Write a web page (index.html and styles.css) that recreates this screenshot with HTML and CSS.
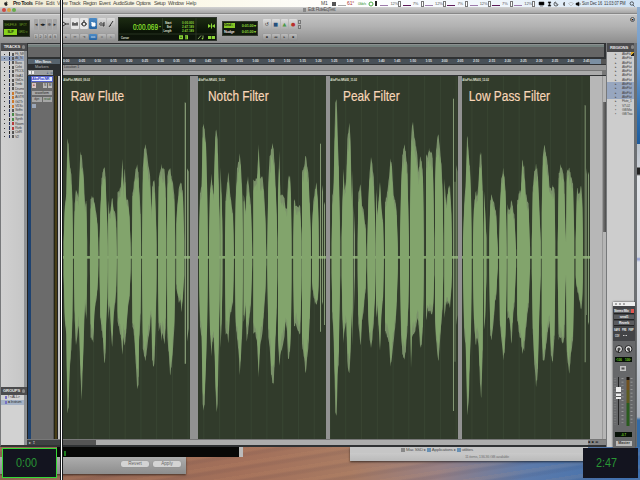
FILE: index.html
```html
<!DOCTYPE html>
<html lang="en">
<head>
<meta charset="utf-8">
<title>Edit: FluteEqTest</title>
<link rel="stylesheet" href="styles.css">
</head>
<body>
<div class="desktop">
  <header class="menubar">
    <svg class="apple" viewBox="0 0 8 10"><path d="M4 3C1.500 1.700 0 3.400 .6 6S2.500 10 4 9.300C5.500 10 7 8.500 7.400 7 5.800 6 6 4 7.200 3.300 6.200 2.200 5 2.500 4 3M4 2.300Q4 .5 5.600 0 5.800 1.700 4 2.300"/></svg>
    <b>Pro Tools</b><span>File</span><span>Edit</span><span>View</span><span>Track</span><span>Region</span><span>Event</span><span>AudioSuite</span><span>Options</span><span>Setup</span><span>Window</span><span>Help</span>
    <div class="status">
      <i class="s-m">M1</i><i class="s-sq"></i><i class="s-line"></i><i class="s-red">61°</i><i class="s-grn">0kb/s</i><svg viewBox="0 0 6 6"><circle cx="3" cy="3" r="2" fill="none" stroke="#4ba843"/></svg><i class="s-bar"></i>
      <div class="meters" id="meters"></div>
      <svg viewBox="0 0 6 6"><path d="M1 1h5v3H1zM2 5h3" stroke="#222" stroke-width=".5"/></svg>
      <svg viewBox="0 0 6 6"><path d="M2 1h3L2 5h3z" stroke="#222" stroke-width=".7"/></svg>
      <svg viewBox="0 0 6 6"><path d="M3 1a2 2 0 1 0 2 2M3 1.500V3h1.500" fill="none" stroke="#222" stroke-width=".7"/></svg>
      <svg viewBox="0 0 6 6"><path d="M2 2l2 2-1 1V1l1 1-2 2" fill="none" stroke="#333" stroke-width=".6"/></svg>
      <svg viewBox="0 0 6 6"><path d="M.5 2.500Q3 0 5.500 2.500L3 5z" fill="none" stroke="#aaa" stroke-width=".6"/></svg>
      <svg viewBox="0 0 6 6"><path d="M1 2h1l2-1v4L2 4H1zM5 2v2" stroke="#222" stroke-width=".5"/></svg>
      <svg class="clock" viewBox="0 0 44 7"><text x="0" y="5.300" textLength="43.500" lengthAdjust="spacingAndGlyphs">Sun Dec 16&nbsp; 11:03:07 PM</text></svg>
      <svg class="last" viewBox="0 0 6 6"><path d="M4 4l1.500 1.500M4.500 2.500a1.700 1.700 0 1 0-3.400 0 1.700 1.700 0 0 0 3.400 0" fill="none" stroke="#222" stroke-width=".7"/></svg>
    </div>
  </header>

  <aside class="strip"></aside>

  <section class="terminal"><i></i></section>
  <section class="dialog"><span>Revert</span><span>Apply</span></section>
  <section class="finder">
    <div class="path"><i class="disk"></i>Mac SSD ▸ <i></i>Applications ▸ <i></i>utilities</div>
    <div class="info">11 items, 136.36 GB available</div>
  </section>

  <main class="edit">
    <div class="title"><i class="r"></i><i class="y"></i><i class="g"></i><span><em></em>Edit: FluteEqTest</span></div>
    <div class="toolbar">
      <div class="modes"><span>SHUFFLE</span><span>SPOT</span><b>SLIP</b><span>GRID ▾</span></div>
      <div class="zooms">
        <div class="row tall"><i>◂</i><i class="dk">◂▸</i><i>≑</i><i>▸</i></div>
        <div class="row small"><i>1</i><i>2</i><i>3</i><i>4</i><i>5</i></div>
      </div>
      <div class="tools">
        <div class="row">
          <i><svg viewBox="0 0 8 10"><path d="M1 3l3 2-3 2M4 5h3"/></svg></i>
          <i class="lt"><svg viewBox="0 0 8 10"><path d="M1 5h6M2 3v4M6 3v4M4 4v3"/></svg></i>
          <i class="lt"><svg viewBox="0 0 8 10"><circle cx="4" cy="5" r="2"/><path d="M4 1v3M1 5h2M5 5h2"/></svg></i>
          <i class="on"><svg viewBox="0 0 8 10"><path d="M3 3v4h3V4H3z" fill="#fff"/></svg></i>
          <i><svg viewBox="0 0 8 10"><path d="M1 5h1M3 3v4M5 4v3h1V3"/></svg></i>
          <i><svg viewBox="0 0 8 10"><path d="M2 8l4-6M3 6l1 1"/></svg></i>
        </div>
        <div class="row small"><i>▸</i><i>↔</i><i>⇥</i><i class="on">▫▫</i><i>=</i><i>▹</i></div>
      </div>
      <div class="counter">
        <svg viewBox="0 0 97 22">
          <text class="big" x="14" y="12" textLength="25" lengthAdjust="spacingAndGlyphs">0:00.069</text>
          <path class="lime" d="M40 8h2l-1 1.500z"/>
          <g class="lab" text-anchor="end"><text x="52.500" y="5.500" textLength="6.500">Start</text><text x="52.500" y="9.800" textLength="4.500">End</text><text x="52.500" y="14.100" textLength="8">Length</text></g>
          <g class="val"><text x="63" y="5.500" textLength="12">0:00.000</text><text x="63" y="9.800" textLength="12">2:47.189</text><text x="63" y="14.100" textLength="12">2:47.189</text></g>
          <path class="lime" d="M89 6l3 2-3 2zM96 6l-3 2 3 2zM92 5.500h1v5h-1z"/>
          <path d="M0 16h97M77 0v22M43.500 0v15" stroke="#33402b" stroke-width=".7"/>
          <text class="cur" x="2" y="20.800" textLength="8">Cursor</text>
          <path class="lime" d="M60 17.300h4v4h-4zM66 17.300h3v4h-3zM89 18h7v3h-7z"/>
          <path d="M61 19.300h2M67 18v3M92.500 18v3" stroke="#1b2b10" stroke-width=".7"/>
          <path d="M79 21l3-3.500M84 20.500v-3" stroke="#b9e08a" stroke-width=".7"/><circle cx="83.400" cy="20.600" r=".8" class="lime"/>
        </svg>
      </div>
      <div class="gridbox"><div><b>Grid ♩</b><span>0:01.00 ▾</span></div><div><em>Nudge</em><span>0:01.00 ▾</span></div></div>
      <div class="transport">
        <div class="row"><i>↺</i><i class="sq">■</i><i class="gr">▲</i><i class="rd">●</i></div>
        <div class="row small"><i>▪</i><i>◂◂</i><i>▸</i><i>▪</i></div>
      </div>
      <div class="pair"><i></i><i></i></div>
      <span class="knob">▾</span>
    </div>

    <div class="body">
      <div class="side left">
        <h2>TRACKS<i></i></h2>
        <div class="list" id="tracks"></div>
        <h2>GROUPS<i></i></h2>
        <div class="groups"><p><em></em><b>!</b> &lt;ALL&gt;</p><p class="sel"><em></em><b>a</b> Instrum</p></div>
      </div>

      <div class="center">
        <div class="overview"></div>
        <div class="rulers">
          <div class="names"><b>Min:Secs</b><span>Markers</span><div class="icons"><i></i><i></i><em>↓ ▫</em></div></div>
          <div class="lanes"><div class="ticks" id="ticks"></div><div class="marker">Location 1</div><div class="blank"></div></div>
        </div>
        <div class="canvas">
          <div class="head">
            <div class="blue"></div>
            <div class="strip-head">
              <b>AltoFlut-NR</b>
              <div class="btns"><i class="rec">●</i><span></span><i>S</i><i>M</i></div>
              <div class="wide">waveform</div>
              <div class="btns two"><i>dyn</i><i class="rd">read</i></div>
              <div class="keys"></div>
            </div>
            <div class="meter"></div>
            <div class="scale"></div>
          </div>
          <div class="clips" id="clips"></div>
          <div class="rest"></div>
          <div class="vscroll"><i></i></div>
        </div>
        <div class="hscroll"><div class="lft">▸ ↥</div><div class="trk"></div><div class="end">▪ ▪ ◂▸</div></div>
      </div>

      <div class="side right">
        <h2>REGIONS<i></i></h2>
        <div class="list" id="regions"></div>
      </div>
    </div>
  </main>

  <section class="mixer">
    <div class="mt"><i></i><i></i><i></i></div>
    <div class="dark"><p>Stereo Mix<em></em></p><p>send1</p><p>Reverb</p>
      <svg viewBox="0 0 20 12"><text x="0" y="4" textLength="6">SAFE</text><text x="8" y="4" textLength="4.500">PRE</text><text x="14.500" y="4" textLength="5">FMP</text><text x="1" y="10" textLength="4.500">COV</text><path d="M9 8.500h4" stroke="#ccc" stroke-dasharray="1 .5"/></svg>
    </div>
    <div class="pan">
      <svg viewBox="0 0 22 100">
        <g fill="#ddd" stroke="#222"><circle cx="6" cy="8" r="3.500"/><circle cx="15.500" cy="8" r="3.500"/></g>
        <g stroke="#222" stroke-width="1.500"><path d="M6 8l-1 3M15.500 8l1 3"/></g>
        <circle cx="6" cy="8" r="1.600" fill="#444"/><circle cx="15.500" cy="8" r="1.600" fill="#444"/>
        <path fill="#071107" d="M2 16h17v5H2zM2 91h17v5H2z"/>
        <g fill="#7cd328" font-size="3.600" font-family="Liberation Sans" font-weight="bold"><text x="3" y="20" textLength="6">‹100</text><text x="12" y="20" textLength="6">100›</text><text x="8" y="95" textLength="5">-0.7</text></g>
        <path fill="#c4c4c4" d="M7 25h6v5H7z"/><path fill="#555" d="M8.500 26.500h3v2h-3z"/>
        <path stroke="#222" d="M5.500 36v48"/><path stroke="#a5a5a5" stroke-dasharray=".7 3" stroke-width="2" d="M9.500 37v47M18.500 37v47"/>
        <path stroke="#ccc" stroke-dasharray=".6 2" stroke-width="2.500" d="M2 37v47" opacity=".3"/>
        <path fill="#181008" d="M13.500 36h3v3h-3z"/><path fill="#70501d" d="M13.500 39h3v10h-3z"/><path fill="#5d5a1e" d="M13.500 49h3v13h-3z"/><path fill="#2a5b1e" d="M13.500 62h3v23h-3z"/>
        <path fill="#eee" d="M3 46h5v12H3z"/><path fill="#555" d="M3 51h5v1.500H3zM3 55h5v1H3z"/>
      </svg>
      <span>Master</span>
    </div>
  </section>

  <div class="timer sel"><svg viewBox="0 0 23 12"><text x="0" y="10.300" textLength="21" lengthAdjust="spacingAndGlyphs">0:00</text></svg></div>
  <div class="timer end"><svg viewBox="0 0 23 12"><text x="0" y="10.300" textLength="21" lengthAdjust="spacingAndGlyphs">2:47</text></svg></div>
  <div class="playhead"></div>
</div>
<script src="app.js"></script>
</body>
</html>
```
FILE: styles.css
```css
* { box-sizing: border-box; }
body { margin: 0; overflow: hidden; font-family: "Liberation Sans Narrow", "Liberation Sans", sans-serif; }
i, em { font-style: normal; }
h2, p { margin: 0; }
svg { display: block; overflow: visible; }
.desktop {
  position: relative; width: 640px; height: 480px; overflow: hidden;
  background:
    repeating-linear-gradient(171deg, rgba(220,160,110,.08) 0 3px, rgba(50,40,60,.07) 5px 7px, transparent 9px 13px),
    linear-gradient(100deg, #8c6250 0, #a3705a 45%, #a77a62 60%, #978084 72%, #5d7bab 84%, #3d6fae 100%);
}
.menubar {
  height: 7px; display: flex; align-items: center; padding-left: 4px; gap: 4px;
  background: linear-gradient(90deg, #efe9d3, #fbf8e8 30%, #fff 55%, #eef5fb 80%, #cfe2f4);
  font: 5.2px/7px "Liberation Sans", sans-serif; color: #4a483f; white-space: nowrap; letter-spacing: -.1px;
}
.menubar > span, .menubar > b { flex: none; }
.menubar > b { width: 18px; margin-left: 1px; letter-spacing: -.45px; color: #222; }
.menubar > span:nth-of-type(1), .menubar > span:nth-of-type(2) { width: 7px; }
.menubar > span:nth-of-type(3) { width: 8px; }
.menubar > span:nth-of-type(4) { width: 10px; letter-spacing: -.3px; }
.menubar > span:nth-of-type(5) { width: 12px; letter-spacing: -.5px; }
.menubar > span:nth-of-type(6) { width: 10px; letter-spacing: -.4px; }
.menubar > span:nth-of-type(7) { width: 19px; letter-spacing: -.4px; }
.menubar > span:nth-of-type(8) { width: 14px; letter-spacing: -.5px; }
.menubar > span:nth-of-type(9) { width: 10px; letter-spacing: -.5px; }
.menubar > span:nth-of-type(10) { width: 14px; letter-spacing: -.5px; }
.apple { width: 4px; height: 5px; fill: #222; flex: none; }
.status { position: absolute; left: 321px; right: 2px; top: 0; height: 7px; display: flex; align-items: center; font-size: 5px; }
.status svg { width: 6px; height: 6px; margin-right: 1.4px; flex: none; }
.s-m { width: 11px; }
.s-sq { width: 4px; height: 4px; background: #555; margin-right: 2px; }
.s-line { width: 8px; height: 1px; background: #aaa; margin: 3px 1px 0 0; }
.s-red { color: #a33; width: 11px; }
.s-grn { color: #4a9a45; width: 10px; font-size: 4px; letter-spacing: -.3px; }
.s-bar { width: 2px; height: 5px; background: #222; }
.meters { width: 160px; flex: none; display: flex; justify-content: space-between; padding: 0 2px 0 3px; margin-right: 1px; align-items: center; }
.meters span { display: flex; align-items: center; width: 21px; font-size: 4px; color: #555; }
.meters u { width: 8px; height: 1px; background: #9d7bab; margin: 4px 2px 0 0; flex: none; }
.meters span:nth-child(even) u { background: #5d1a58; }
.meters em { width: 3px; height: 6px; border: .5px solid #777; margin-left: auto; background: #fff; }
.status .clock { width: 44px; height: 7px; margin: 0 3px 0 -1px; font-size: 5px; fill: #333; }
.status .last { margin: 0; }
.strip {
  position: absolute; left: 637px; top: 7px; width: 3px; height: 440px;
  background: linear-gradient(#8dadcf 0, #6b98cb 60px, #2c6dae 110px, #1f5c9d 137px, #b9c2cc 137px, #c9ced5 160px, #222 161px, #222 167px, #e1e4e8 169px, #d4d8de 250px, #8c9ad0 252px, #dfe2e8 255px, #d0d4da 330px, #a9b0ba 410px, #336aa5 413px);
}
.terminal { position: absolute; left: 57px; top: 447px; width: 186px; height: 10px; background: #080807; border-right: 4px solid #bbb; }
.terminal i { display: block; width: 2px; height: 5px; margin: 4px 0 0 7px; background: #1d7c1d; }
.dialog {
  position: absolute; left: 0; top: 457px; width: 186px; height: 17px; padding: 4px 5px 0; gap: 4px;
  display: flex; justify-content: flex-end; background: linear-gradient(#adadad, #8d8d8d); box-shadow: 0 1px 2px rgba(0,0,0,.6);
}
.dialog span { width: 28px; height: 6px; border-radius: 2px; background: #d4d4d4; font: 4.6px/6px "Liberation Sans", sans-serif; text-align: center; color: #666; box-shadow: 0 0 1px #777; }
.finder { position: absolute; left: 350px; top: 447px; width: 238px; height: 14px; background: linear-gradient(#d5d5d5, #bababa); box-shadow: 0 1px 2px rgba(0,0,0,.6); font: 4.4px/6px "Liberation Sans", sans-serif; color: #555; white-space: nowrap; }
.path { height: 6px; padding-left: 51px; letter-spacing: -.22px; display: flex; align-items: center; gap: 1px; background: #c6c6c6; }
.path i { width: 4px; height: 4px; background: #6790b4; flex: none; }
.path .disk { background: #888; }
.info { padding: 1px 0 0 115px; font-size: 4px; letter-spacing: -.32px; color: #777; }

.edit { position: absolute; left: 0; top: 7px; width: 637px; height: 440px; display: grid; grid-template-rows: 7px 29px 404px; background: #8e8e8e; }
.title { display: flex; align-items: center; gap: 1px; padding-left: 2px; background: linear-gradient(#d2d2d2, #a5a5a5); border-bottom: 1px solid #888; }
.title > i { width: 4px; height: 4px; border-radius: 50%; }
.r { background: #cf4a43; } .y { background: #d9a243; } .g { background: #67ad4b; }
.title span { margin-left: 286px; display: flex; align-items: center; font: 4.8px/6px "Liberation Sans", sans-serif; letter-spacing: -.55px; color: #555; }
.title em { width: 3px; height: 4px; background: #888; margin-right: 2px; }
.toolbar { display: flex; background: linear-gradient(#c3c3c3, #b2b2b2 40%, #8d8d8d); border-top: 1px solid #d6d6d6; position: relative; }
.modes { margin: 5px 0 0 3px; width: 27px; height: 17px; background: #131d0a; border: 1px solid #353a31; display: grid; grid-template-columns: 13px 12px; grid-template-rows: 8px 6px; font: 3px/8px "Liberation Sans", sans-serif; letter-spacing: -.2px; color: #6d9b25; text-align: center; }
.modes b { background: #86d21b; color: #183006; line-height: 6px; }
.modes span:last-child { line-height: 6px; }
.row { display: flex; gap: 1px; height: 11px; }
.row i { flex: 1; display: grid; place-items: center; background: linear-gradient(#ddd, #a8a8a8); border-radius: 1px; font: 5px/5px "DejaVu Sans", sans-serif; color: #333; overflow: hidden; }
.row.small { height: 6px; }
.row.small i { background: linear-gradient(#bdbdbd, #919191); font-size: 3.4px; box-shadow: 0 0 1px #777; }
.row svg { width: 8px; height: 10px; fill: none; stroke: #333; stroke-width: 1; }
.zooms { width: 23px; margin: 4px 0 0 4px; display: grid; grid-template-rows: 11px 6px; gap: 4px; align-content: start; }
.zooms .tall i { background: #a5a5a5; }
.zooms .dk { color: #111; flex: 1.5; }
.tools { width: 51px; margin: 3px 0 0 5px; display: grid; grid-template-rows: 11px 6px; gap: 5px; align-content: start; }
.tools .lt { background: #e6e6e6; }
.row .on, .row.small .on { background: linear-gradient(#4d8cc7, #2563a2); color: #fff; }
.tools .on svg { stroke: #fff; }
.counter { margin: 2px 0 0 5px; width: 99px; height: 24px; background: linear-gradient(#1c2b12, #0b1407 60%, #0e140b); border: 1px solid #303530; }
.counter svg { width: 97px; height: 22px; font: bold 3.6px "Liberation Sans", sans-serif; }
.counter .big { font: 9.4px "Liberation Sans", sans-serif; fill: #8fe32e; stroke: #8fe32e; stroke-width: .2; }
.lime { fill: #8bd638; }
.lab, .cur { fill: #e4e8de; }
.val { fill: #8bd638; }
.gridbox { margin: 6px 0 0 5px; width: 36px; height: 15px; background: #121a0e; border: 1px solid #343a30; padding: 1px; font: bold 3.8px/6px "Liberation Sans", sans-serif; color: #8bd638; }
.gridbox div { display: flex; justify-content: space-between; height: 6px; }
.gridbox b { width: 11px; background: #86c727; color: #15240a; height: 5px; line-height: 5px; white-space: nowrap; letter-spacing: -.2px; }
.gridbox em { color: #ddd; letter-spacing: -.3px; }
.gridbox span { letter-spacing: -.2px; white-space: nowrap; }
.transport { width: 34px; margin: 4px 0 0 5px; display: grid; grid-template-rows: 11px 6px; gap: 4px; align-content: start; }
.transport .sq { color: #26507d; } .transport .gr { color: #4c9a48; } .transport .rd { color: #b92f2b; }
.pair { display: grid; grid-template-rows: 4px 4px; gap: 1px; margin: 5px 0 0 1px; width: 3px; align-content: start; }
.pair i { border: .5px solid #777; background: #bbb; }
.knob { margin: 2px 2px 0 auto; width: 5px; height: 5px; border-radius: 50%; border: .5px solid #555; font: 4px/4px "DejaVu Sans", sans-serif; text-align: center; background: #ccc; }

.body { display: grid; grid-template-columns: 27px 579px 31px; background: #2c2e2f; }
.side { display: grid; background: #c9c9c9; border-left: 1px solid #77797b; overflow: hidden; }
.side h2 { background: #4b4b4d; color: #e6e6e6; font: bold 4.2px/8px "Liberation Sans", sans-serif; height: 8px; text-align: right; padding-right: 7px; letter-spacing: -.2px; position: relative; }
.side h2 i { position: absolute; right: 2px; top: 2px; width: 3px; height: 4px; border-radius: 2px; background: #888; }
.left { grid-template-rows: 8px 336px 8px 52px; border-bottom: 2px solid #333; }
.list { font: 3.6px/4.3px "Liberation Sans", sans-serif; color: #444; padding-top: 1px; white-space: nowrap; overflow: hidden; }
.left .list { border-right: 3px solid #8f9295; background: linear-gradient(90deg, #d0d0d0, #c6c6c6); }
.left .list p { display: flex; align-items: center; height: 4.35px; padding-left: 3px; letter-spacing: -.3px; }
.list .dot { width: 1px; height: 1px; background: #333; margin-right: 4px; flex: none; }
.list .bar { width: 1px; height: 3.4px; margin-right: 2px; flex: none; }
.list .ico { width: 2px; height: 3px; margin-right: 1px; background: #555; flex: none; }
.list .sel { background: #97a6bf; }
.groups { border-right: 3px solid #8f9295; background: #d2d2d2; font: 3.6px/5px "Liberation Sans", sans-serif; letter-spacing: -.2px; white-space: nowrap; overflow: hidden; color: #333; }
.groups p { height: 5px; padding-left: 4px; display: flex; gap: 1px; align-items: center; }
.groups em { width: 2px; height: 3px; background: #7770c5; }
.groups .sel { background: #a5b2c5; }
.right { border-right: 3px solid #6d7073; grid-template-rows: 9px 395px; background: #cfcfcf; }
.right h2 { height: 9px; line-height: 9px; padding-right: 6px; }
.right h2 i { right: 0; }
.right .list { font-size: 3.4px; letter-spacing: -.25px; padding-top: 0; background: #cdcdcd; position: relative; }
.right .list p { height: 4.3px; padding-left: 8px; display: flex; gap: 3px; }
.right .list span { width: 4px; }
.right .list::after { content: ""; position: absolute; right: 0; top: 0; width: 3px; height: 4px; background: linear-gradient(135deg, #d8a82c 50%, #222 50%); }

.center { display: grid; grid-template-rows: 14px 18px 1px 363px 6px 2px; background: #303234; }
.center > .canvas { grid-row: 4; }
.center > .hscroll { grid-row: 5; }
.overview { margin: 1px 2px 0 1px; border-top: 1px solid #8b8f8f; background: #666; box-shadow: inset 0 2px #73807d; }
.rulers { display: grid; grid-template-columns: 36px 543px; }
.names { display: grid; grid-template-rows: 2px 5px 6px 5px; padding-left: 1px; background: #2e3132; font: bold 4px/5px "Liberation Sans", sans-serif; color: #e8edf0; }
.names b { grid-row: 2; background: #57636d; padding-left: 7px; letter-spacing: -.2px; }
.names span { grid-row: 3; padding-left: 7px; color: #bbb; background: #2c2f31; font-weight: normal; line-height: 6px; font-size: 3.8px; }
.icons { grid-row: 4; background: #9c9fa1; display: flex; gap: 1px; align-items: center; padding-left: 1px; width: 25px; }
.icons i { width: 2px; height: 3px; background: #eee; }
.icons em { margin-left: 11px; font: 3.6px/4px "DejaVu Sans", sans-serif; color: #244a77; white-space: nowrap; }
.lanes { display: grid; grid-template-rows: 2px 5px 1px 5px 5px; }
.ticks { grid-row: 2; display: flex; font: bold 3.5px/5px "Liberation Sans", sans-serif; color: #d5d9dc; overflow: hidden; background: linear-gradient(90deg, #485057 0 527px, #7b8fa2 527px 538px, #555 538px); }
.ticks span { flex: none; width: 15.77px; text-align: left; letter-spacing: -.2px; }
.marker { grid-row: 4; background: #969696; font: 3.6px/5px "Liberation Sans", sans-serif; letter-spacing: -.15px; color: #333; padding-left: 1px; }
.blank { grid-row: 5; background: #ababab; border-top: .5px solid #777; border-right: 4px solid #777; }
.canvas { display: grid; grid-template-columns: 36px 527px 13px 3px; }
.head { display: grid; grid-template-columns: 3px 22px 5px 5px; padding-left: 1px; background: #222; }
.blue { background: #1e426f; }
.strip-head { background: #6b6b6b; }
.strip-head > b { display: block; height: 6px; background: #e7ebff; border: .5px solid #5463c9; font: bold 3.8px/5px "Liberation Sans", sans-serif; letter-spacing: -.35px; color: #3243c2; overflow: hidden; white-space: nowrap; }
.btns { display: flex; gap: 1px; margin: 1px 1px 3px; height: 5px; }
.btns i { width: 4px; background: #b9b9b9; font: 3.2px/5px "Liberation Sans", sans-serif; text-align: center; color: #333; }
.btns .rec { background: #d9c5c3; color: #833; }
.btns span { flex: 1; }
.wide { height: 4px; margin: 0 1px 2px; background: #a6a6a6; font: 3.2px/4px "Liberation Sans", sans-serif; text-align: center; color: #222; }
.btns.two { margin: 0 1px; } .btns.two i { flex: 1; background: #a6a6a6; } .btns.two .rd { color: #285b28; }
.keys { width: 4px; height: 4px; margin: 2px 0 0 1px; background: #9ca7b8; }
.meter { background: linear-gradient(90deg, #505050 0 1px, #252515 1px 2px, #493f18 2px 4px, #222 4px); }
.scale { background: linear-gradient(90deg, #c0c0c0 0 2px, #888 2px 3px, #111 3px); }
.clips { display: grid; grid-template-columns: 127px 8px 128px 4px 128px 4px 128px; background: #929292; }
.clip { background: #313b2b; }
.clip svg { width: 100%; height: 363px; overflow: hidden; }
.gl { stroke: #3c4a37; stroke-width: 2; }
.edge { fill: #95b181; opacity: .72; }
.core { fill: #82a46c; }
.fine { fill: #9db78b; opacity: .75; }
.cname { font: bold 11px "Liberation Sans", sans-serif; fill: #e5e8df; }
.ctitle { font: 45px "Liberation Sans", sans-serif; fill: #f8d6b8; stroke: #f8d6b8; stroke-width: .6px; }
.rest { background: linear-gradient(90deg, #b7b7b7 0 12px, #999 12px); }
.vscroll { background: #b5b5b5; padding-top: 26px; }
.vscroll i { display: block; height: 130px; background: linear-gradient(90deg, #777, #4c4c4c); }
.hscroll { display: grid; grid-template-columns: 33px 1fr 18px; background: #a8a8a8; border-top: 1px solid #777; }
.lft { background: #3f4143; color: #ccc; font: 4px/5px "DejaVu Sans", sans-serif; padding-left: 2px; }
.trk { background: linear-gradient(90deg, #555 0 36px, #adadad 36px); }
.end { background: #858585; font: 3.5px/5px "DejaVu Sans", sans-serif; color: #222; white-space: nowrap; overflow: hidden; }

.mixer { position: absolute; left: 613px; top: 302px; width: 22px; height: 146px; background: #777; display: grid; grid-template-rows: 4px 35px 107px; box-shadow: 0 0 2px #333; }
.mt { background: #ededed; display: flex; gap: 2px; padding: 1px 0 0 2px; }
.mt i { width: 2px; height: 2px; border: .5px solid #777; border-radius: 50%; }
.dark { background: #434447; padding: 3px 1px 0; font: bold 3.3px/4.5px "Liberation Sans", sans-serif; color: #eee; }
.dark p { background: #5b5c5f; height: 5px; margin-bottom: 1px; text-align: center; letter-spacing: -.2px; position: relative; white-space: nowrap; border-bottom: .5px solid #222; }
.dark p:first-child { text-align: left; }
.dark em { position: absolute; right: 0; top: 0; width: 3px; height: 4px; background: #e05650; }
.dark svg { width: 20px; height: 12px; fill: #eee; font-size: 3px; }
.pan { display: grid; grid-template-rows: 100px 5px; background: #67686a; }
.pan svg { width: 22px; height: 100px; }
.pan span { margin: 0 3px; background: #bbb; color: #333; font: bold 3.6px/4px "Liberation Sans", sans-serif; text-align: center; }
.timer { position: absolute; top: 448px; height: 30px; background: #13141f; display: flex; align-items: center; }
.timer svg { width: 23px; height: 12px; margin-left: 13px; fill: #289634; font: 12px "Liberation Sans", sans-serif; }
.timer.sel { left: 2px; width: 55px; border: 1px solid #35d835; }
.timer.end { left: 583px; width: 55px; background: #13141f; }
.playhead { position: absolute; left: 60px; top: 0; width: 3px; height: 480px; background: #fff; border: solid #17191b; border-width: 0 1px; }
```
FILE: app.js
```js
const $ = id => document.getElementById(id);

$('meters').innerHTML = ['12%', '7%', '12%', '7%', '12%', '7%', '12%']
  .map(v => `<span><u></u>${v}<em></em></span>`).join('');

$('ticks').innerHTML = Array.from({ length: 34 }, (_, k) => {
  const s = k * 5;
  return `<span>${Math.floor(s / 60)}:${String(s % 60).padStart(2, '0')}</span>`;
}).join('');

const tracks = ['Flt_NR', 'Alt_N', 'Bass', 'Celst', 'PICOL', 'GtrA1', 'GtrDs', 'Trmb', 'Drums', 'Piano', 'AGTR', 'Gt2Tr', 'Vl1Sc', 'StrEn', 'Street', 'Synth', 'Room', 'Rvrb', 'CtrlR', 'V2'];
const hue = i => i > 8 && i < 13 ? '#cb782c' : i === 14 || i === 15 ? '#488848' : i === 16 || i === 17 ? '#b43b3b' : '#555';
$('tracks').innerHTML = tracks.map((t, i) =>
  `<p class="${i === 1 ? 'sel' : ''}"><i class="dot"></i><i class="bar" style="background:${i % 3 ? '#24305c' : '#222'}"></i><i class="ico" style="background:${hue(i)}"></i>${t}</p>`).join('');

const regions = ['AltoFlut', 'AltoFlut', 'AltoFlut', 'AltoFlut', 'AltoFlut', 'AltoFlut', 'AltoFlut', 'AltoFlut', 'AltoFlut', 'AltoFlut', 'AltoFlut', 'Flute_1', 'V7-02', 'GB Mix', 'GB Trac'];
$('regions').innerHTML = regions.map((t, i) =>
  `<p class="${i > 6 && i < 11 ? 'sel' : ''}"><span>${i < 12 ? '▸' : '▪'}</span>${t}</p>`).join('');

/* Envelope lobes: x, top, bottom triples; the axis is at y = 547. */
const clips = [
  { x: 8, w: 382, off: 60, title: 'Raw Flute', tx: 31, tw: 161, name: 'AltoFlut-NR#05_09-02', gap: 8, lobes: [
    '10 500 600 13 390 740 18 345 790 21 180 1025 25 200 1005 28 255 900 33 290 830 36 350 760 38 490 600',
    '41 490 600 43 380 740 47 335 820 51 350 790 54 360 760 57 300 790 60 222 900 64 232 985 67 265 900 71 310 780 75 390 690 78 365 745 81 500 600',
    '89 500 600 91 370 790 95 352 805 99 365 805 103 380 710 108 410 680 112 440 650 115 530 570',
    '118 500 600 120 400 740 124 305 770 128 280 800 132 268 872 135 280 862 138 350 760 141 430 690 143 520 580',
    '144 370 740 148 410 700 152 390 770 156 360 825 160 390 740 164 400 700 168 440 650 170 530 560',
    '172 350 740 177 340 770 182 330 790 187 248 843 190 320 800 194 275 815 198 360 780 204 370 700 208 410 680 212 520 580',
    '215 500 600 217 350 760 222 310 790 227 270 880 231 262 948 235 285 940 237 335 800 241 400 740 243 510 580',
    '246 480 620 248 270 830 252 215 850 256 198 868 260 230 830 265 260 800 270 290 770 272 350 730 274 400 740 276 330 860 281 305 888 284 320 850 287 400 740 290 510 600',
    '294 480 620 296 300 780 300 280 760 304 265 800 308 275 780 313 280 810 317 330 770 319 500 600',
    '321 480 620 322 290 800 326 280 840 330 272 908 335 300 880 339 315 830 343 350 770 346 500 600',
    '349 430 640 353 370 670 357 330 690 361 315 680 365 320 720 369 350 670 373 500 600',
    '374 82 866 378 84 866', '381 280 800 386 290 760'] },
  { x: 18, w: 384, off: 192, title: 'Notch Filter', tx: 48, tw: 182, name: 'AltoFlut-NR#05_10-02', gap: 4, lobes: [
    '21 490 600 24 350 760 29 320 800 32 155 990 35 135 1018 38 160 990 42 200 870 45 310 780 48 490 600',
    '51 480 600 54 340 780 58 295 845 62 330 800 65 350 800 68 230 850 71 160 960 74 158 1025 77 190 990 81 350 780 84 480 600',
    '85 270 825 89 350 760 92 480 600',
    '99 480 600 101 360 790 105 320 780 109 288 808 113 330 740 118 380 710 123 410 690 126 520 570',
    '129 500 600 131 370 750 135 270 800 139 255 830 143 233 902 147 270 850 151 350 770 153 500 590',
    '155 350 750 160 400 700 164 330 800 168 300 780 173 350 730 177 390 690 181 520 570',
    '184 300 790 190 310 780 195 300 810 200 207 908 205 300 820 211 300 780 216 340 720 221 440 640 223 530 570',
    '226 500 600 229 310 790 233 240 820 237 220 900 241 203 925 245 220 930 250 300 820 254 400 720 256 500 600',
    '258 350 800 262 220 880 265 350 850 270 350 830 276 360 800 281 390 750 285 400 770 288 310 860 294 290 840 297 350 780 299 510 590',
    '304 480 620 306 365 760 312 390 750 318 385 780 325 390 780 329 500 600',
    '330 290 810 335 270 850 341 235 902 346 270 850 350 300 810 353 370 750 357 490 600',
    '360 450 630 364 370 670 369 340 690 373 310 700 378 370 680 381 500 600',
    '384 205 770 387 207 770', '390 330 690 393 350 680', '396 380 750 399 390 750'] },
  { x: 15, w: 384, off: 325, title: 'Peak Filter', tx: 54, tw: 170, name: 'AltoFlut-NR#05_11-02', gap: 4, lobes: [
    '20 500 600 22 360 730 26 320 800 29 150 930 31 70 1025 35 70 1025 38 160 910 41 260 870 43 350 750 46 500 600',
    '50 480 610 52 370 740 56 280 805 59 340 770 64 300 750 67 180 870 70 160 900 73 136 902 77 200 830 80 370 720 82 280 818 84 450 640',
    '86 390 730 90 480 600',
    '98 490 600 100 340 760 107 322 820 111 380 750 117 410 700 122 450 650 124 530 570',
    '127 500 600 130 370 740 134 285 800 138 240 825 142 260 800 147 310 740 150 420 680 152 520 580',
    '153 330 740 157 410 700 161 370 760 165 310 838 169 380 740 174 430 680 177 530 570',
    '180 380 770 186 350 790 192 300 810 196 243 882 201 270 850 206 350 810 211 370 760 215 400 700 219 520 580',
    '225 480 600 228 330 780 232 240 840 238 202 860 243 230 830 247 270 770 250 400 700 252 500 600',
    '255 400 720 258 200 880 261 140 800 264 130 790 268 180 780 273 210 760 277 230 740 280 290 740 285 240 820 290 250 820 294 290 760 297 490 600',
    '303 240 740 308 235 710 313 213 720 318 225 720 323 240 720 326 370 670 328 500 600',
    '330 310 740 333 220 800 337 185 840 341 175 864 345 220 800 350 270 740 353 350 700 355 500 600',
    '358 310 730 364 380 690 370 330 690 375 320 710 379 400 650 381 500 600',
    '384 70 1008 387 72 1008', '389 320 860 391 320 860', '394 270 750 397 290 720'] },
  { x: 18, w: 385, off: 456, title: 'Low Pass Filter', tx: 38, tw: 245, name: 'AltoFlut-NR#05_12-02', gap: 0, lobes: [
    '21 490 600 24 390 770 29 320 820 33 190 990 35 180 1025 39 240 970 42 270 850 45 340 780 47 490 600',
    '51 490 600 54 385 750 59 340 820 64 360 790 68 310 820 72 230 930 76 230 978 80 330 850 82 460 600',
    '84 340 770 88 400 740 92 490 600',
    '100 480 600 103 370 790 107 352 800 112 370 760 117 390 690 121 410 670 126 520 580',
    '130 480 600 132 390 750 136 310 790 142 272 862 147 310 830 150 370 750 153 520 580',
    '155 380 740 161 400 740 167 365 820 171 390 740 176 420 690 181 520 580',
    '184 370 740 190 350 780 195 340 800 199 248 840 205 270 830 210 350 770 218 380 700 223 520 580',
    '228 490 600 231 330 780 236 280 880 241 263 940 246 290 900 250 370 750 255 500 600',
    '258 390 780 261 240 860 266 203 860 271 230 820 276 260 780 281 320 750 286 340 850 291 325 870 296 330 800 299 500 600',
    '306 490 620 309 290 800 315 265 790 320 280 810 326 310 800 329 460 640 331 490 610 333 290 830 337 275 880 341 273 902 346 300 840 352 320 800 356 490 610',
    '360 480 620 364 330 650 370 350 680 376 320 715 380 370 680 382 500 600',
    '387 90 862 390 92 862', '392 280 720 394 300 720', '397 290 750 400 300 740'] }
];

let seed = 7;
const rnd = () => (seed = seed * 16807 % 2147483647) / 2147483647;

function lobe(str) {
  const n = str.split(' ').map(Number), p = [];
  for (let i = 0; i < n.length; i += 3) p.push(n.slice(i, i + 3));
  const top = [], bot = [], ct = [], cb = [];
  for (let i = 0; i < p.length - 1; i++) {
    const [x0, t0, b0] = p[i], [x1, t1, b1] = p[i + 1];
    for (let x = x0; x < x1; x += 1.5) {
      const f = (x - x0) / (x1 - x0), j = p.length > 2 ? rnd() * 14 : 0;
      const t = t0 + (t1 - t0) * f + j, b = b0 + (b1 - b0) * f - j;
      top.push([x, t]); bot.push([x, b]);
      const k = .82 + rnd() * .15;
      ct.push([x, 547 - (547 - t) * k]); cb.push([x, 547 + (b - 547) * k]);
    }
  }
  const l = p[p.length - 1];
  top.push([l[0], l[1]]); bot.push([l[0], l[2]]);
  const pts = (a, b) => a.concat(b.slice().reverse()).map(q => q.map(v => v.toFixed(1)).join()).join(' ');
  if (p.length < 3) return `<polygon class="fine" points="${pts(top, bot)}"/>`;
  return `<polygon class="edge" points="${pts(top, bot)}"/><polygon class="core" points="${pts(ct, cb)}"/>`;
}

$('clips').innerHTML = clips.map(c => {
  let g = '';
  for (let px = 77.7; px < 592; px += 15.77) {
    const x = (px - c.off) * 3;
    if (x > c.x && x < c.x + c.w) g += `<line class="gl" x1="${x}" x2="${x}" y1="0" y2="1095"/>`;
  }
  const mid = `<rect class="core" x="${c.x}" y="543" width="${c.w}" height="8"/>`;
  return `<div class="clip"><svg viewBox="${c.x} 3 ${c.w} 1089" preserveAspectRatio="none">${g}${mid}${c.lobes.map(lobe).join('')}
    <text class="cname" x="${c.x + 1}" y="17" textLength="80" lengthAdjust="spacingAndGlyphs">${c.name}</text>
    <text class="ctitle" x="${c.tx}" y="77" textLength="${c.tw}" lengthAdjust="spacingAndGlyphs">${c.title}</text></svg></div>${c.gap ? '<div></div>' : ''}`;
}).join('');

document.querySelectorAll('text[textLength]').forEach(t => t.setAttribute('lengthAdjust', 'spacingAndGlyphs'));
```
